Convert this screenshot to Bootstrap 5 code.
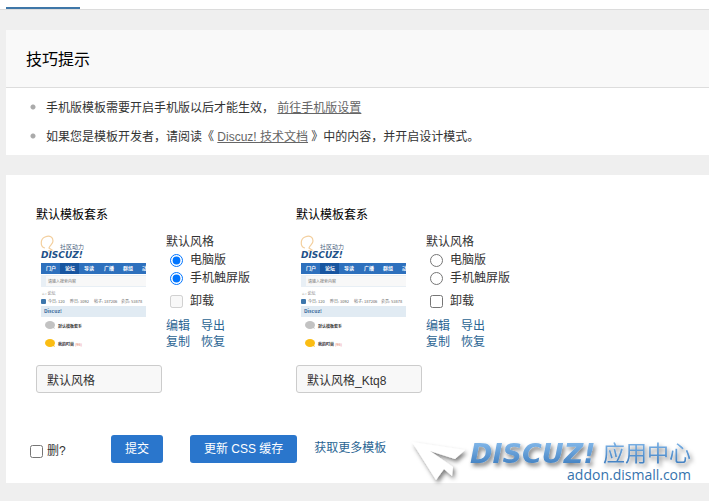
<!DOCTYPE html>
<html lang="zh-CN">
<head>
<meta charset="utf-8">
<meta name="viewport" content="width=device-width, initial-scale=1">
<title>默认模板套系</title>
<link href="https://cdn.jsdelivr.net/npm/bootstrap@5.3.0/dist/css/bootstrap.min.css" rel="stylesheet">
<style>
body{background:#efefef;color:#333;font:12px/18px "Liberation Sans","Noto Sans CJK SC",sans-serif}
.tabbar{height:10px;border-bottom:1px solid #dcdcdc;padding-left:6px}
.tab-active{width:74px;height:9px;border-bottom:2px solid #3f77a8}
.page{padding:20px 0 18px 6px}
.panel-head{background:#f9f9f9;border-bottom:1px solid #ddd;padding:19px 20px 16px;font-size:16px;line-height:22px;font-weight:400;color:#000}
.tips{padding:6px 20px 3px}
.tips li{line-height:29px;padding-left:20px;background:radial-gradient(circle at 7px 13px,#aaa 2px,transparent 3px)}
.tips a{color:#666}
.styles-panel{margin-top:20px;padding:30px 24px 20px}
.style-list{padding-left:6px;column-gap:50px;row-gap:30px}
.style-item{width:210px}
.style-title{font-size:12px;line-height:20px;font-weight:400;color:#000}
.thumb-row{margin:10px 0}
.thumb{width:110px;height:120px}
.options{padding-left:20px;margin-top:-2px}
.options label,.del{white-space:nowrap}
.choice{gap:7px;padding-left:4px;height:18px}
.choice input,.del input{margin:0;width:13px;height:13px;flex:none}
.uninstall{height:24px;margin-top:2px;margin-bottom:5px}
.actions{line-height:16px;grid-template-columns:24px 24px;column-gap:11px}
.actions a,.more{color:#2b6593;text-decoration:none}
.name-box{width:126px;height:28px;border:1px solid #ccc;border-radius:3px;background:#f8f8f8;padding:0 10px;font-size:12px;color:#333}
.foot{margin-top:42px}
.del{width:81px;gap:4px;padding-top:4px}
.btn-main{--bs-btn-bg:#2a76cc;--bs-btn-color:#fff;--bs-btn-hover-bg:#2166b4;--bs-btn-hover-color:#fff;--bs-btn-active-bg:#2166b4;--bs-btn-active-color:#fff;font-size:12px;line-height:18px;padding:5px 14px;border:0;border-radius:3px}
.btn-gap{margin-left:27px}
.more{margin-left:17px;margin-bottom:3px}
.brand{right:12px;bottom:-12px;width:292px;height:60px;pointer-events:none}
.brand-name{font:italic bold 27px "DejaVu Sans",sans-serif}
.brand-cn{font:22px "Noto Sans CJK SC",sans-serif}
.brand-url{font:14px "Open Sans",sans-serif}
.pic-cn{font-family:"Noto Sans CJK SC",sans-serif}
.pic-logo{font:italic bold 9px "DejaVu Sans",sans-serif}
</style>
<script src="https://cdn.jsdelivr.net/npm/bootstrap@5.3.0/dist/js/bootstrap.bundle.min.js"></script>
</head>
<body>
<svg class="d-none" aria-hidden="true">
  <symbol id="preview" viewBox="0 0 110 120">
    <path d="M9 13C4 12 4 4 9 2s8 0 8 4c0 3-3 4-4 7l3 2-4 1" fill="none" stroke="#f3cf9e" stroke-width="1.2"/>
    <g class="pic-cn">
      <text x="24" y="14" font-size="6" fill="#4c6480">社区动力</text>
      <rect x="5" y="28" width="105" height="11" fill="#2d70bd"/>
      <rect x="24" y="28" width="19" height="11" fill="#1755a0"/>
      <g font-size="5" font-weight="bold" fill="#fff">
        <text x="10" y="35">门户</text><text x="29" y="35">论坛</text><text x="48" y="35">导读</text><text x="68" y="35">广播</text><text x="87" y="35">群组</text><text x="106" y="35">动</text>
      </g>
      <rect x="5" y="40" width="105" height="12" fill="#e8eff5"/>
      <rect x="10" y="41" width="100" height="10" fill="#f8f8f8"/>
      <text x="12" y="48" font-size="4" fill="#777">请输入搜索内容</text>
      <text x="6" y="60" font-size="4" fill="#777">⌂ › 论坛</text>
      <rect x="5" y="64" width="5" height="5" rx="1" fill="#3e77ac"/>
      <g font-size="4" fill="#666">
        <text x="12" y="68">今日: 120</text><text x="34" y="68">昨日: 3092</text><text x="58" y="68">帖子: 187206</text><text x="85" y="68">会员: 53878</text>
      </g>
      <rect x="5" y="71" width="105" height="11" fill="#e1ebf3"/>
      <text x="8" y="78" font-size="5" font-weight="bold" fill="#37689a">Discuz!</text>
      <ellipse cx="14" cy="90" rx="5" ry="4" fill="#c2c2c2"/><path d="m15 92 4 2-2-4z" fill="#c2c2c2"/>
      <text x="22" y="93" font-size="4" font-weight="bold" fill="#333">默认模板套系</text>
      <ellipse cx="14" cy="108" rx="5" ry="4" fill="#fbbd13"/><path d="m15 110 4 2-2-4z" fill="#fbbd13"/>
      <text x="22" y="111" font-size="4" font-weight="bold" fill="#333">我的时尚 <tspan fill="#e78070" font-weight="normal">(96)</tspan></text>
    </g>
    <text x="5" y="23" class="pic-logo" fill="#204f88">DISCUZ!</text>
  </symbol>
</svg>

<div class="tabbar bg-white"><div class="tab-active"></div></div>
<main class="page">
  <section class="bg-white">
    <h2 class="panel-head m-0">技巧提示</h2>
    <ul class="tips list-unstyled m-0">
      <li>手机版模板需要开启手机版以后才能生效， <a href="#mobile">前往手机版设置</a></li>
      <li>如果您是模板开发者，请阅读《 <a href="#docs">Discuz! 技术文档</a> 》中的内容，并开启设计模式。</li>
    </ul>
  </section>

  <form class="styles-panel bg-white position-relative">
    <div class="style-list d-flex flex-wrap">
      <article class="style-item">
        <h3 class="style-title m-0">默认模板套系</h3>
        <div class="thumb-row d-flex">
          <svg class="thumb flex-shrink-0" role="img" aria-label="Discuz!"><use href="#preview"/></svg>
          <div class="options">
            <div>默认风格</div>
            <label class="choice d-flex align-items-center"><input type="radio" name="pc-default" checked>电脑版</label>
            <label class="choice d-flex align-items-center"><input type="radio" name="touch-default" checked>手机触屏版</label>
            <label class="choice uninstall d-flex align-items-center"><input type="checkbox" disabled>卸载</label>
            <div class="actions d-grid">
              <a href="#edit1">编辑</a><a href="#export1">导出</a>
              <a href="#copy1">复制</a><a href="#restore1">恢复</a>
            </div>
          </div>
        </div>
        <input class="name-box d-block" type="text" value="默认风格" aria-label="风格名称">
      </article>
      <article class="style-item">
        <h3 class="style-title m-0">默认模板套系</h3>
        <div class="thumb-row d-flex">
          <svg class="thumb flex-shrink-0" role="img" aria-label="Discuz!"><use href="#preview"/></svg>
          <div class="options">
            <div>默认风格</div>
            <label class="choice d-flex align-items-center"><input type="radio" name="pc-alt">电脑版</label>
            <label class="choice d-flex align-items-center"><input type="radio" name="touch-alt">手机触屏版</label>
            <label class="choice uninstall d-flex align-items-center"><input type="checkbox">卸载</label>
            <div class="actions d-grid">
              <a href="#edit2">编辑</a><a href="#export2">导出</a>
              <a href="#copy2">复制</a><a href="#restore2">恢复</a>
            </div>
          </div>
        </div>
        <input class="name-box d-block" type="text" value="默认风格_Ktq8" aria-label="风格名称">
      </article>
    </div>
    <div class="foot d-flex align-items-center">
      <label class="del d-flex align-items-center"><input type="checkbox">删?</label>
      <button type="button" class="btn btn-main">提交</button>
      <button type="button" class="btn btn-main btn-gap">更新 CSS 缓存</button>
      <a class="more" href="#more">获取更多模板</a>
    </div>
    <svg class="brand position-absolute" viewBox="0 0 292 60" overflow="visible">
      <defs>
        <linearGradient id="sky" x1="0" y1="0" x2="0" y2="1"><stop offset=".2" stop-color="#7db3e6"/><stop offset=".85" stop-color="#4482c2"/></linearGradient>
        <filter id="soft" x="-20%" y="-30%" width="140%" height="180%"><feDropShadow dx="2" dy="3" stdDeviation="2" flood-color="#000" flood-opacity=".5"/></filter>
      </defs>
      <g filter="url(#soft)">
        <path d="M7 7 60 15 50 24 25 16 48 32 47 41 39 34 31 45z" fill="#fff"/>
        <text class="brand-name" x="65" y="28" fill="url(#sky)">DISCUZ!</text>
        <text class="brand-cn" x="198" y="26" fill="url(#sky)">应用中心</text>
      </g>
      <text class="brand-url" x="286" y="45" text-anchor="end" fill="#3673ad">addon.dismall.com</text>
    </svg>
  </form>
</main>
</body>
</html>
